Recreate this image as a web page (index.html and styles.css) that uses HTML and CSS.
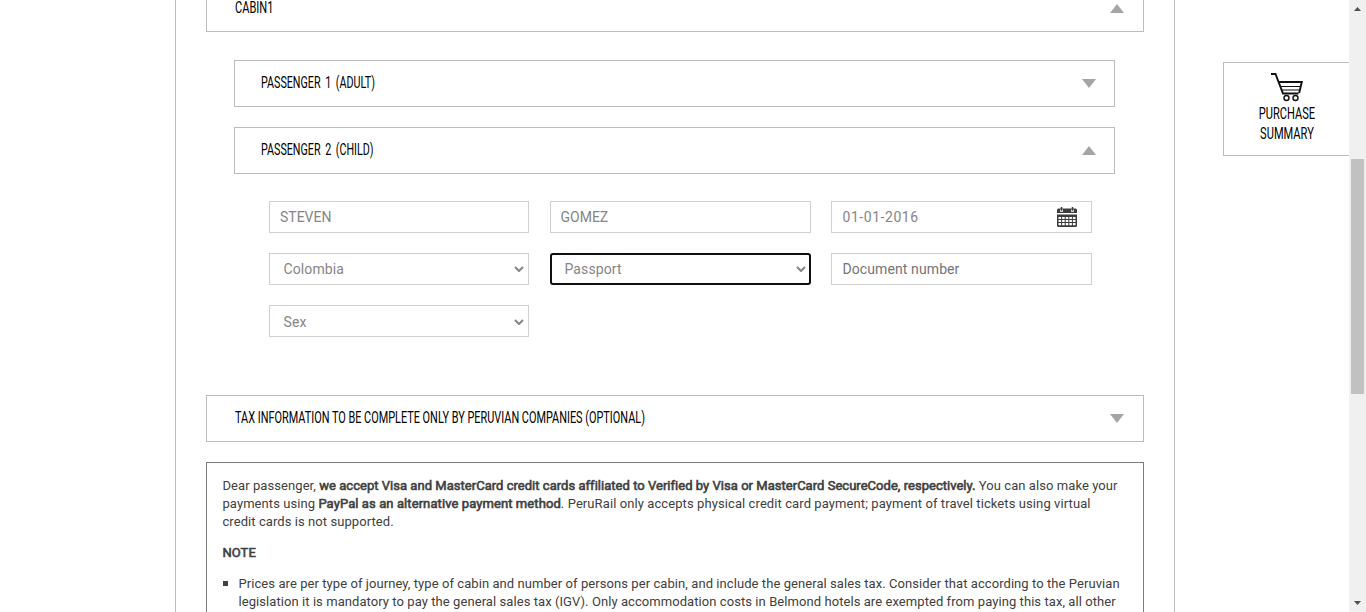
FILE: index.html
```
<!DOCTYPE html>
<html lang="en">
<head>
<meta charset="utf-8">
<title>Passenger information</title>
<link rel="stylesheet" href="styles.css">
</head>
<body>
<div class="page">
  <main class="content">
    <section class="bar bar-cabin"><h2 class="heading"><span class="cond">CABIN1</span></h2><svg class="arrow" viewBox="0 0 14 9"><path d="M0 9 7 0l7 9z"/></svg></section>
    <div class="passengers">
      <section class="bar"><h3 class="heading"><span class="cond">PASSENGER 1 (ADULT)</span></h3><svg class="arrow" viewBox="0 0 14 9"><path d="M0 0h14L7 9z"/></svg></section>
      <section class="bar"><h3 class="heading"><span class="cond">PASSENGER 2 (CHILD)</span></h3><svg class="arrow" viewBox="0 0 14 9"><path d="M0 9 7 0l7 9z"/></svg></section>
    </div>
    <form class="fields">
      <div class="field caps"><span>STEVEN</span></div>
      <div class="field caps"><span>GOMEZ</span></div>
      <div class="field date"><span>01-01-2016</span>
        <svg class="calendar" viewBox="0 0 20 20"><path fill="#3b3b3b" d="M1.500 1.500h17A1.500 1.500 0 0 1 20 3v3H0V3a1.500 1.500 0 0 1 1.500-1.500zM0 7.500h20V18.500a1.500 1.500 0 0 1-1.500 1.500h-17A1.500 1.500 0 0 1 0 18.500z"/><path fill="#fff" d="M1.500 10h2.600v2H1.500zm3.600 0h2.600v2H5.100zm3.600 0h2.600v2H8.700zm3.600 0h2.600v2h-2.600zm3.600 0h2.600v2h-2.600zM1.500 13h2.600v2H1.500zm3.600 0h2.600v2H5.100zm3.600 0h2.600v2H8.700zm3.600 0h2.600v2h-2.600zm3.600 0h2.600v2h-2.600zM1.500 16h2.600v2.200H1.500zm3.600 0h2.600v2.200H5.100zm3.600 0h2.600v2.200H8.700zm3.600 0h2.600v2.200h-2.600zm3.600 0h2.600v2.200h-2.600z"/><path d="M4.500 2.500v2.300M15.500 2.500v2.300" stroke="#fff" stroke-width="3"/><path d="M4.500 0v3.700M15.500 0v3.700" stroke="#3b3b3b" stroke-width="1.500"/></svg></div>
      <div class="field select"><span>Colombia</span><svg class="chevron" viewBox="0 0 10 6"><path d="m1 1 4 4 4-4"/></svg></div>
      <div class="field select focused"><span>Passport</span><svg class="chevron" viewBox="0 0 10 6"><path d="m1 1 4 4 4-4"/></svg></div>
      <div class="field hint"><span>Document number</span></div>
      <div class="field select low"><span>Sex</span><svg class="chevron" viewBox="0 0 10 6"><path d="m1 1 4 4 4-4"/></svg></div>
    </form>
    <section class="bar"><h2 class="heading"><span class="cond tax">TAX INFORMATION TO BE COMPLETE ONLY BY PERUVIAN COMPANIES (OPTIONAL)</span></h2><svg class="arrow" viewBox="0 0 14 9"><path d="M0 0h14L7 9z"/></svg></section>
    <section class="notes">
      <p>Dear passenger, <b>we accept Visa and MasterCard credit cards affiliated to Verified by Visa or MasterCard SecureCode, respectively.</b> You can also make your<br>payments using <b class="loose">PayPal as an alternative payment method</b><span class="loose">. PeruRail only accepts physical credit card payment; payment of travel tickets using virtual</span><br>credit cards is not supported.</p>
      <p><b>NOTE</b></p>
      <ul>
        <li>Prices are per type of journey, type of cabin and number of persons per cabin, and include the general sales tax. Consider that according to the Peruvian<br>legislation it is mandatory to pay the general sales tax (IGV). Only accommodation costs in Belmond hotels are exempted from paying this tax, all other</li>
      </ul>
    </section>
  </main>
  <aside class="summary">
    <svg class="cart" viewBox="0 0 32 29"><path d="M0 1h4.500L12 20.500h15.500M7 9h23.800L28.200 20" fill="none" stroke="#111" stroke-width="1.900"/><path d="M9 13.500h20M10 17h18.500" stroke="#111" stroke-width="1.200"/><circle cx="15.500" cy="25" r="2.500" fill="none" stroke="#111" stroke-width="1.400"/><circle cx="24.500" cy="25" r="2.500" fill="none" stroke="#111" stroke-width="1.400"/></svg>
    <span class="cond">PURCHASE</span>
    <span class="cond">SUMMARY</span>
  </aside>
  <div class="scrollbar">
    <svg class="step" viewBox="0 0 7 4"><path d="M0 4 3.500 0 7 4z"/></svg>
    <div class="thumb"></div>
    <svg class="step down" viewBox="0 0 7 4"><path d="M0 0h7L3.500 4z"/></svg>
  </div>
</div>
</body>
</html>
```
FILE: styles.css
```
* { box-sizing: border-box; }
body { margin: 0; background: #fff; font-family: Roboto, sans-serif; overflow: hidden; }
.page { display: flex; width: 1366px; height: 612px; overflow: hidden; }
.content { width: 1000px; height: 612px; margin-left: 175px; padding: 0 30px; border: solid #bcbcbc; border-width: 0 1px; overflow: hidden; }
.bar { display: flex; justify-content: space-between; align-items: center; height: 47px; border: 1px solid #bcbcbc; padding: 0 19px 0 28px; }
.bar-cabin { height: 32px; border-top: 0; padding-bottom: 15px; }
.heading { margin: -1px 0 0; font-weight: 400; height: 20px; width: 0; }
.bar-cabin .heading { height: 14px; margin-top: -1px; }
.cond { display: block; width: max-content; font-size: 16.5px; line-height: 20px; color: #000; white-space: nowrap; transform: scaleX(.672); transform-origin: left center; }
.bar-cabin .cond { line-height: 14px; }
.passengers .cond { word-spacing: 3px; transform: scaleX(.65); }
.tax { transform: scaleX(.66); }
.arrow { width: 14px; height: 9px; fill: #a3a5a8; flex: none; }
.passengers { display: flex; flex-direction: column; gap: 20px; margin: 28px 29px 0 28px; }
.passengers .bar { padding: 0 18px 0 26px; }
.fields { display: grid; grid-template-columns: 260px 261px 261px; column-gap: 20.5px; row-gap: 20px; margin: 27px 0 58px 63px; }
.field { display: flex; align-items: center; justify-content: space-between; height: 32px; border: 1px solid #d0d0d0; padding: 0 14px 0 10.5px; font-size: 14px; letter-spacing: .1px; color: #858585; }
.field.caps { letter-spacing: 0; padding-left: 10px; }
.field.date { letter-spacing: .55px; }
.field.select { padding: 0 4px 0 13.5px; }
.field.low { padding-top: 1px; }
.field.hint { color: #757575; letter-spacing: .1px; }
.field.focused { border: 2px solid #101010; border-radius: 3px; padding: 0 3px 0 13px; letter-spacing: .1px; }
.calendar { width: 20px; height: 20px; }
.chevron { width: 10px; height: 6px; fill: none; stroke: #858585; stroke-width: 2; }
.notes { height: 180px; margin-top: 20px; padding: 14px 15.5px; border: 1px solid #7c7c7c; font-size: 13px; line-height: 18px; letter-spacing: .07px; color: #404040; white-space: nowrap; }
.notes p { margin: 0 0 13px; }
.notes b { font-weight: 400; letter-spacing: .03px; -webkit-text-stroke: .6px #404040; }
.notes .loose { letter-spacing: .09px; }
.notes ul { margin: 0; padding: 0; list-style: none; }
.notes li { padding-left: 16px; background: linear-gradient(#404040, #404040) 0.5px 6px / 5px 5px no-repeat; }
.summary { display: flex; flex-direction: column; align-items: center; width: 126px; height: 94px; margin: 62px 0 0 48px; border: 1px solid #bcbcbc; border-right: 0; padding: 10px 0 0; }
.summary .cond { transform-origin: center; }
.cart { width: 32px; height: 29px; margin-bottom: 2px; }
.scrollbar { display: flex; flex-direction: column; align-items: center; width: 17px; height: 612px; background: #f0f0f0; }
.step { width: 7px; height: 4px; margin-top: 7px; fill: #505050; }
.thumb { width: 13px; height: 235px; margin-top: 148px; background: #c1c1c1; }
.down { margin-top: 207px; }
```
